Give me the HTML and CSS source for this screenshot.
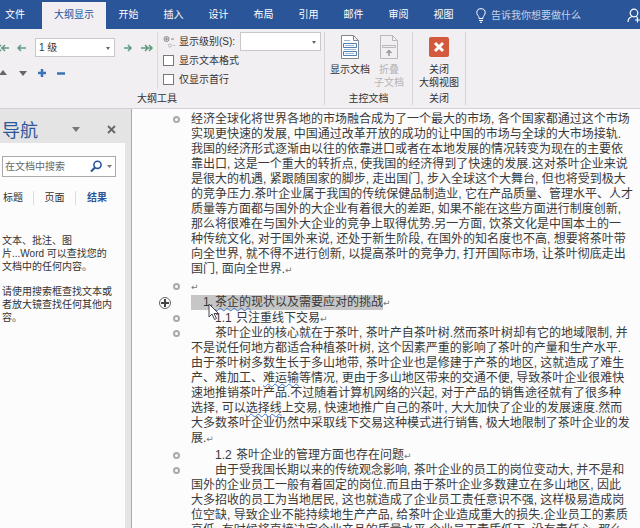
FILE: index.html
```
<!doctype html>

<html lang="zh-CN">
  <head>
    <meta charset="utf-8">
    <title>大纲显示</title>
    <link rel="stylesheet" href="styles.css">
  </head>
  <body>

    <nav class="tabs">
      <a href="#file" class="file">文件</a>
      <a href="#outline" class="active">大纲显示</a>
      <a href="#home">开始</a>
      <a href="#insert">插入</a>
      <a href="#design">设计</a>
      <a href="#layout">布局</a>
      <a href="#references">引用</a>
      <a href="#mail">邮件</a>
      <a href="#review">审阅</a>
      <a href="#view">视图</a>
      <button class="tell-me">
        <svg width="10" height="15" viewBox="0 0 10 15" fill="none" stroke="#fff"><path d="M3 10.500V9.500C3 8 .8 7 .8 4.700a4.200 4 0 0 1 8.400 0C9.200 7 7 8 7 9.500v1zM3 12.500h4M4 14.300h2"/></svg>
        告诉我你想要做什么
      </button>
      <button class="share" aria-label="共享">
        <svg width="15" height="16" viewBox="0 0 15 16" fill="none" stroke="#fff" stroke-width="1.200"><circle cx="7" cy="5" r="3.800"/><path d="M1 14c0-3 2-5 4.500-5.500M9 8.500l1.500 1M10.500 9.500v5M8 12h5"/></svg>
      </button>
    </nav>

    <div class="ribbon">
      <section class="group outline">
        <div class="group-body">
          <div class="levels">
            <div class="row">
              <button aria-label="提升至标题 1"><svg width="10" height="8" viewBox="0 0 10 8" class="arrow"><path d="M5 1 2 4l3 3M1 4h8M1 1l-3 3 3 3"/></svg></button>
              <button aria-label="升级"><svg width="10" height="8" viewBox="0 0 10 8" class="arrow"><path d="M4 1 1 4l3 3M1 4h8"/></svg></button>
              <span class="select level"><select aria-label="大纲级别"><option>1 级</option></select></span>
              <button aria-label="降级"><svg width="10" height="8" viewBox="0 0 10 8" class="arrow"><path d="m5 1 3 3-3 3M8 4H1"/></svg></button>
              <button aria-label="降级为正文"><svg width="13" height="8" viewBox="0 0 13 8" class="arrow"><path d="m4 1 3 3-3 3M8 1l3 3-3 3M11 4H0"/></svg></button>
            </div>
            <div class="row moves">
              <button aria-label="上移"><svg width="10" height="10" viewBox="0 0 10 10"><path d="M-1 7h8L3 2z" fill="#666"/></svg></button>
              <button aria-label="下移"><svg width="10" height="10" viewBox="0 0 10 10"><path d="M1 3h8L5 8z" fill="#666"/></svg></button>
              <button aria-label="展开"><svg width="10" height="10" viewBox="0 0 10 10"><path d="M5 1v8M1 5h8" stroke="#3a74b5" stroke-width="2.500"/></svg></button>
              <button aria-label="折叠"><svg width="10" height="10" viewBox="0 0 10 10"><path d="M1 5.500h8" stroke="#3a74b5" stroke-width="2.500"/></svg></button>
            </div>
          </div>
          <div class="options">
            <div class="option">
              <svg width="12" height="14" viewBox="0 0 12 14" fill="none" stroke="#888"><circle cx="3.500" cy="4" r="2.500"/><path d="M2 4h3M3.500 2.500v3M8 4h3"/><circle cx="7" cy="10.500" r="1.500" stroke="#bbb"/><path d="M10 10.500h2" stroke="#bbb"/></svg>
              <label for="show-level">显示级别(S):</label>
              <span class="select show"><select id="show-level"><option></option></select></span>
            </div>
            <div class="option">
              <input type="checkbox" id="show-format"> <label for="show-format">显示文本格式</label>
            </div>
            <div class="option">
              <input type="checkbox" id="first-line"> <label for="first-line">仅显示首行</label>
            </div>
          </div>
        </div>
        <h2>大纲工具</h2>
      </section>

      <section class="group master">
        <div class="group-body">
          <button>
            <svg width="20" height="26" viewBox="0 0 20 26" fill="#fff" stroke="#7f8894"><path d="M1.500 1.500h12l5 5v18h-17zM13.500 1.500v5h5"/><path d="M3.500 9.500h13v4h-13zM3.500 17.500h13v4h-13z" stroke="#4f7fb5"/><path d="M5 11.500h9M5 19.500h9M4 6.500h6M4 15.500h12" stroke="#9db5d0"/></svg>
            显示文档
          </button>
          <button disabled>
            <svg width="20" height="26" viewBox="0 0 20 26" fill="none" stroke="#b9b7b9"><path d="M1.500 1.500h12l5 5v18h-17zM13.500 1.500v5h5M3.500 11.500h13v2h-13z"/><path d="M10 22v-5M7.500 19 10 16.500l2.500 2.500" stroke="#999" stroke-width="1.500"/></svg>
            折叠<br>子文档
          </button>
        </div>
        <h2>主控文档</h2>
      </section>

      <section class="group close">
        <div class="group-body">
          <button>
            <svg width="20" height="26" viewBox="0 0 20 26"><rect y="3" width="20" height="20" rx="2" fill="#d35a3d"/><path d="m6 9 8 8M14 9l-8 8" stroke="#fff" stroke-width="3"/></svg>
            关闭<br>大纲视图
          </button>
        </div>
        <h2>关闭</h2>
      </section>
    </div>

    <div class="workspace">
      <aside class="navigation">
        <header>
          <h1>导航</h1>
          <button aria-label="任务窗格选项"><svg width="8" height="5" viewBox="0 0 8 5"><path d="M0 0h8L4 5z" fill="#777"/></svg></button>
          <button aria-label="关闭"><svg width="9" height="9" viewBox="0 0 9 9"><path d="m1 1 7 7M8 1 1 8" stroke="#666" stroke-width="1.800"/></svg></button>
        </header>
        <div class="pane">
          <form class="search">
            <input type="text" placeholder="在文档中搜索" aria-label="在文档中搜索">
            <button type="button" aria-label="搜索"><svg width="22" height="13" viewBox="0 0 22 13"><circle cx="7.500" cy="4.800" r="3.600" fill="none" stroke="#2b579a" stroke-width="1.600"/><path d="m5 7.500-4 4" stroke="#2b579a" stroke-width="2.200"/><path d="M17 5h5l-2.500 3z" fill="#777"/></svg></button>
          </form>
          <div class="views">
            <a href="#headings">标题</a>
            <a href="#pages">页面</a>
            <a href="#results" class="current">结果</a>
          </div>
          <p>文本、批注、图<br>片...Word 可以查找您的<br>文档中的任何内容。</p>
          <p>请使用搜索框查找文本或<br>者放大镜查找任何其他内<br>容。</p>
        </div>
      </aside>

      <main class="document">
        <div class="para body-text">
          <i class="ring"></i>
          <p>经济全球化将世界各地的市场融合成为了一个最大的市场, 各个国家都通过这个市场<br>
          实现更快速的发展, 中国通过改革开放的成功的让中国的市场与全球的大市场接轨.<br>
          我国的经济形式逐渐由以往的依靠进口或者在本地发展的情况转变为现在的主要依<br>
          靠出口, 这是一个重大的转折点, 使我国的经济得到了快速的发展.这对茶叶企业来说<br>
          是很大的机遇, 紧跟随国家的脚步, 走出国门, 步入全球这个大舞台, 但也将受到极大<br>
          的竞争压力.茶叶企业属于我国的传统保健品制造业, 它在产品质量、管理水平、人才<br>
          质量等方面都与国外的大企业有着很大的差距, 如果不能在这些方面进行制度创新,<br>
          那么将很难在与国外大企业的竞争上取得优势.另一方面, 饮茶文化是中国本土的一<br>
          种传统文化, 对于国外来说, 还处于新生阶段, 在国外的知名度也不高, 想要将茶叶带<br>
          向全世界, 就不得不进行创新, 以提高茶叶的竞争力, 打开国际市场, 让茶叶彻底走出<br>
          国门, 面向全世界.<b class="mark">↵</b></p>
        </div>
        <div class="para">
          <i class="ring"></i>
          <p><b class="mark">↵</b></p>
        </div>
        <div class="para heading">
          <i class="plus"></i>
          <h3><span class="selected"><span class="number">1.</span><u>茶企的</u>现状以及需要应对的挑战</span><b class="mark">↵</b></h3>
          <svg class="cursor" width="12" height="18" viewBox="0 0 12 18"><path d="M1 1v13l3-3 2.500 5.500 2-1L6 10.500h4.500z" fill="#fff" stroke="#445"/></svg>
        </div>
        <div class="para subheading">
          <i class="ring"></i>
          <h4><span class="number">1.1</span>只注重线下交易<b class="mark">↵</b></h4>
        </div>
        <div class="para body-text indented">
          <i class="ring"></i>
          <p>茶叶企业的核心就在于茶叶, 茶叶产自茶叶树.然而茶叶树却有它的地域限制, 并<br>
          不是说任何地方都适合种植茶叶树, 这个因素严重的影响了茶叶的产量和生产水平.<br>
          由于茶叶树多数生长于多山地带, 茶叶企业也是修建于产茶的地区, 这就造成了难生<br>
          产、难加工、<u>难运输</u>等情况, 更由于多山地区带来的交通不便, 导致茶叶企业很难快<br>
          速地推销茶叶产品.不过随着计算机网络的兴起, 对于产品的销售途径就有了很多种<br>
          选择, 可以<u>选择线</u>上交易, 快速地推广自己的茶叶, 大大加快了企业的发展速度.然而<br>
          大多数茶叶企业仍然中采取线下交易这种模式进行销售, 极大地限制了茶叶企业的发<br>
          展.<b class="mark">↵</b></p>
        </div>
        <div class="para subheading">
          <i class="ring"></i>
          <h4><span class="number">1.2</span>茶叶企业的管理方面也存在问题<b class="mark">↵</b></h4>
        </div>
        <div class="para body-text indented">
          <i class="ring"></i>
          <p>由于受我国长期以来的传统观念影响, 茶叶企业的员工的岗位变动大, 并不是和<br>
          国外的企业员工一般有着固定的岗位.而且由于茶叶企业多数建立在多山地区, 因此<br>
          大多招收的员工为当地居民, 这也就造成了企业员工责任意识不强, 这样极易造成岗<br>
          位空缺, 导致企业不能持续地生产产品, 给茶叶企业造成重大的损失.企业员工的素质<br>
          高低, 有时候将直接决定企业产品的质量水平,企业员工素质低下, 没有责任心, 那么</p>
        </div>
      </main>
    </div>

  </body>
</html>
```
FILE: styles.css
```
* {
  box-sizing: border-box;
}
body {
  background: #fcfcfc;
  color: #333;
  display: flex;
  flex-direction: column;
  font: 10px/13px "Liberation Sans", "Noto Sans CJK SC", sans-serif;
  height: 100vh;
  margin: 0;
  overflow: hidden;
}
h1, h2, h3, h4, p {
  font-weight: normal;
  margin: 0;
}
button, input, select {
  background: none;
  border: none;
  color: inherit;
  font: inherit;
  margin: 0;
  padding: 0;
}
svg {
  display: block;
  flex: none;
}
a {
  color: inherit;
  text-decoration: none;
}

/* tab bar */
.tabs {
  background: #2a5699;
  color: #fff;
  display: flex;
  flex: none;
  height: 29px;
  padding-top: 2px;
  white-space: nowrap;
}
.tabs a {
  line-height: 25px;
  text-align: center;
  width: 45px;
}
.tabs .file {
  padding-right: 12px;
  width: 42px;
}
.tabs .active {
  background: #f2eff2;
  color: #2a5699;
  width: 64px;
}
.tell-me {
  align-items: center;
  color: #c3d3ea;
  display: flex;
  gap: 5px;
  margin-left: 10px;
}
.share {
  margin-left: auto;
  margin-right: -2px;
}

/* ribbon */
.ribbon {
  background: #f2eff2;
  border-bottom: 1px solid #d2d0d2;
  display: flex;
  flex: none;
  height: 80px;
  padding: 3px 0;
}
.group {
  border-right: 1px solid #d6d3d6;
  display: flex;
  flex-direction: column;
  justify-content: space-between;
}
.group h2 {
  font-size: 10px;
  line-height: 13px;
  text-align: center;
}
.group-body {
  display: flex;
}
.outline {
  width: 325px;
}
.outline h2 {
  padding-right: 10px;
}
.levels {
  border-right: 1px solid #dddadd;
  display: flex;
  flex-direction: column;
  gap: 10px;
  padding-top: 6px;
  width: 159px;
}
.row {
  align-items: center;
  display: flex;
  gap: 8px;
}
.row button:first-child {
  margin-right: -1px;
}
.moves {
  gap: 9px;
  padding-top: 1px;
}
.arrow {
  fill: none;
  stroke: #5f9a80;
  stroke-width: 1.5;
}
.select {
  background: #fff;
  border: 1px solid #c9c7c9;
  position: relative;
}
.select::after {
  border: 2px solid transparent;
  border-bottom: none;
  border-top: 3px solid #666;
  content: "";
  position: absolute;
  right: 4px;
  top: 8px;
}
.select select {
  appearance: none;
  display: block;
  height: 17px;
  padding-left: 3px;
  width: 100%;
}
.level {
  width: 80px;
}
.show {
  margin-left: auto;
  width: 81px;
}
.options {
  flex: 1;
  padding: 0 3px 0 5px;
}
.option {
  align-items: center;
  display: flex;
  gap: 5px;
  height: 19px;
  white-space: nowrap;
}
.option > svg {
  margin-right: -1px;
}
.option input {
  appearance: none;
  background: #fff;
  border: 1px solid #777;
  height: 11px;
  width: 11px;
}
.master {
  width: 88px;
}
.master .group-body {
  gap: 4px;
  padding-left: 5px;
}
.close {
  width: 53px;
}
.close .group-body {
  justify-content: center;
}
.group-body > button {
  align-self: flex-start;
  padding-top: 2px;
  text-align: center;
  white-space: nowrap;
}
.group-body > button svg {
  margin: 0 auto 3px;
}
.group-body > button:disabled {
  color: #b5b3b5;
}

/* navigation pane */
.workspace {
  display: flex;
  flex: 1;
  min-height: 0;
}
.navigation {
  background: #e4e4e4;
  border-right: 1px solid #aaa;
  display: flex;
  flex: none;
  flex-direction: column;
  padding-right: 6px;
  width: 132px;
}
.navigation header {
  align-items: center;
  display: flex;
  height: 34px;
  padding: 6px 9px 0 2px;
}
.navigation h1 {
  color: #2b579a;
  flex: 1;
  font-size: 18px;
  line-height: 24px;
  padding-top: 4px;
}
.navigation header button {
  margin-left: 27px;
}
.navigation header button:first-of-type {
  margin-left: 0;
}
.pane {
  background: #fcfcfc;
  flex: 1;
  padding: 13px 0 0 2px;
}
.search {
  align-items: center;
  background: #fff;
  border: 1px solid #aaa;
  display: flex;
  height: 21px;
  margin-right: 9px;
  padding: 0 3px 0 2px;
}
.search input {
  flex: 1;
  min-width: 0;
}
.search input::placeholder {
  color: #666;
}
.views {
  display: flex;
  margin: 14px 0 29px;
}
.views a {
  border-right: 1px solid #ddd;
  line-height: 14px;
  text-align: center;
  width: 42px;
}
.views a:first-child {
  padding-right: 9px;
  width: 32px;
}
.views .current {
  border: none;
  color: #2b579a;
  font-weight: bold;
}
.pane p {
  margin-bottom: 12px;
  white-space: nowrap;
}

/* outline document */
.document {
  color: #3a3a3a;
  flex: 1;
  font-size: 12px;
  line-height: 15px;
  min-width: 0;
  overflow: hidden;
  padding-top: 3px;
  white-space: nowrap;
}
.para {
  display: flex;
  padding-left: 27px;
  position: relative;
}
.body-text {
  margin-bottom: 2px;
}
.indented p {
  text-indent: 24px;
}
.ring {
  border: 2px solid #aaa;
  border-radius: 50%;
  flex: none;
  height: 7px;
  margin: 4px 11px 0 14px;
  width: 7px;
}
.plus {
  background:
    linear-gradient(#444, #444) center / 8px 2px no-repeat,
    linear-gradient(#444, #444) center / 2px 8px no-repeat;
  border: 1px solid #666;
  border-radius: 50%;
  flex: none;
  height: 12px;
  margin: 2px 20px 0 0;
  width: 12px;
}
h3, h4 {
  font-size: 12px;
}
.heading,
.subheading {
  margin-top: 1px;
}
.selected {
  background: #c6c6c6;
  display: inline-block;
  padding-left: 12px;
}
.number {
  display: inline-block;
  width: 12px;
}
.subheading h4 {
  padding-left: 24px;
}
.subheading .number {
  width: 21px;
}
.mark {
  color: #777;
  font: 9px/12px "DejaVu Sans", sans-serif;
}
u {
  text-decoration: underline wavy #3f78d0 1px;
  text-decoration-skip-ink: none;
  text-underline-offset: 1px;
}
.cursor {
  left: 76px;
  position: absolute;
  top: 8px;
  z-index: 1;
}
```
